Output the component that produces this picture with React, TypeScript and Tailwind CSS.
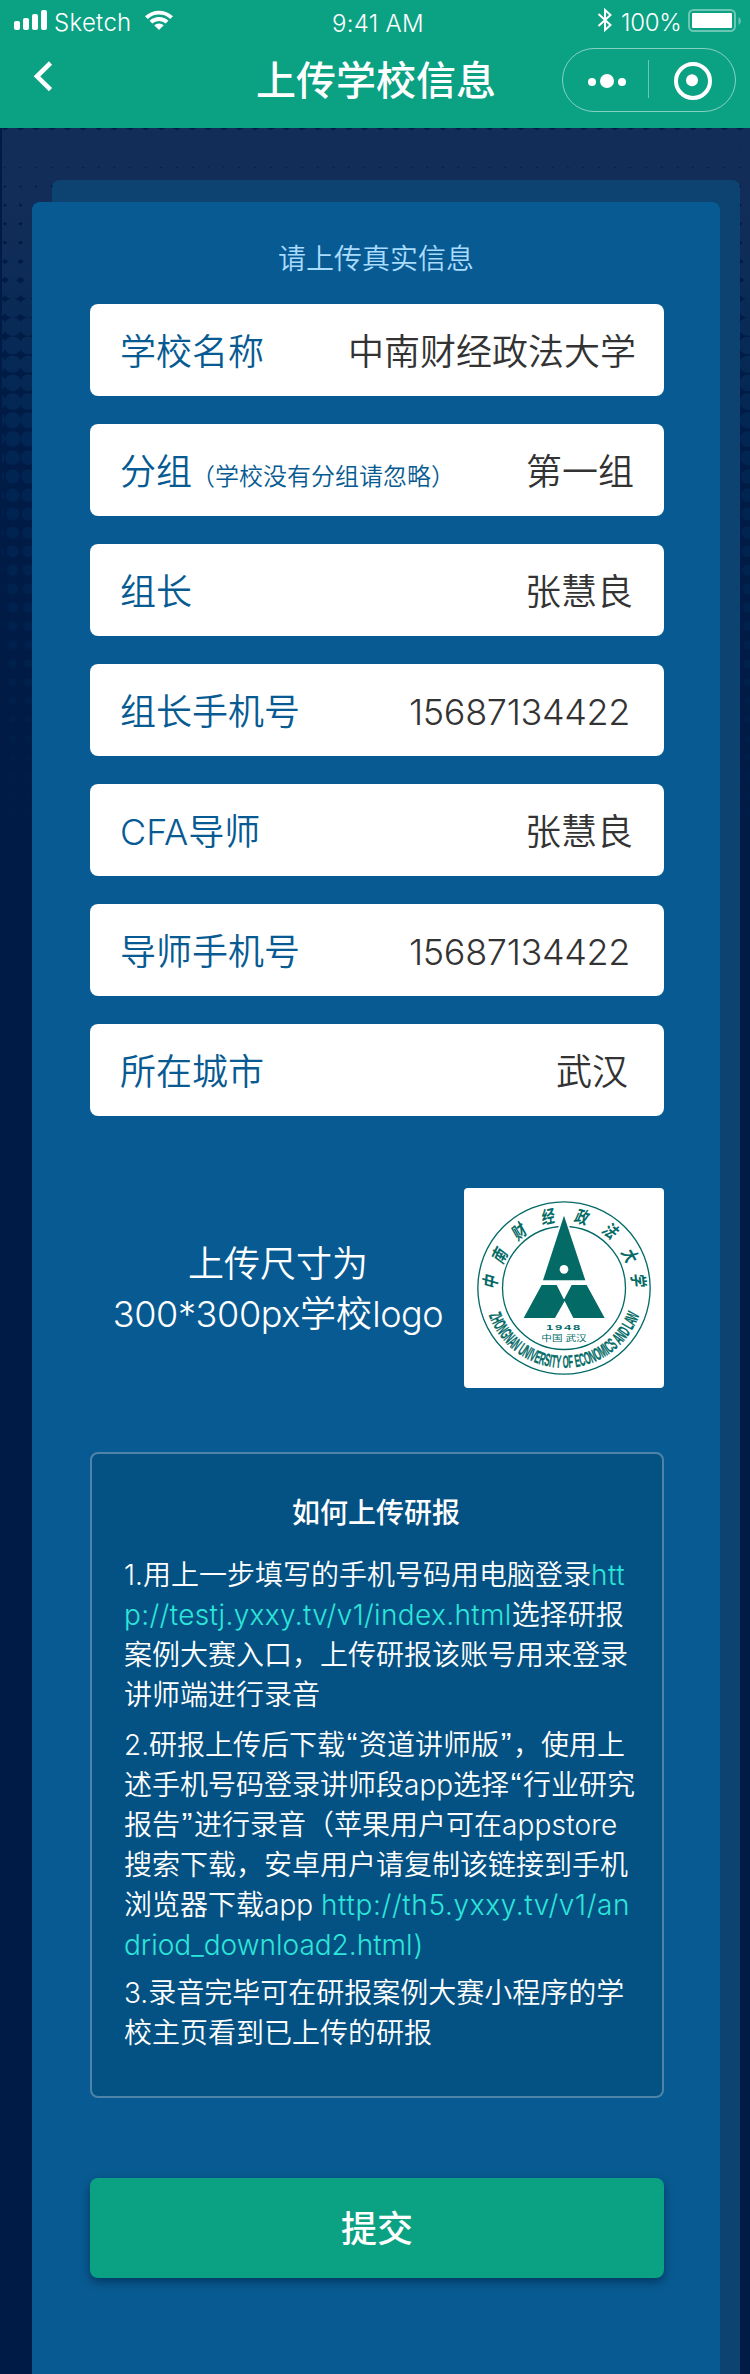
import React from "react";

const DOT_X = 15.64;
const DOT_Y = 18.72;

function buildDots() {
  let d = "";
  for (let row = 0; row < 38; row++) {
    const y = 139.5 + row * DOT_Y;
    const r = 12 - (y - 139.5) * 0.0149;
    if (r <= 0.5) break;
    for (let col = -1; col < 49; col++) {
      const x = 12.7 + col * DOT_X;
      d += `M${(x - r).toFixed(1)} ${y.toFixed(1)}a${r.toFixed(2)} ${r.toFixed(2)} 0 1 0 ${(2 * r).toFixed(2)} 0a${r.toFixed(2)} ${r.toFixed(2)} 0 1 0 ${(-2 * r).toFixed(2)} 0z`;
    }
  }
  return d;
}

const dots = buildDots();

function Backdrop() {
  return (
    <svg className="absolute inset-0" width="750" height="2374" viewBox="0 0 750 2374" aria-hidden="true">
      <defs>
        <linearGradient id="dots" gradientUnits="userSpaceOnUse" x1="0" y1="128" x2="0" y2="830">
          <stop offset="0" stopColor="#132d59" />
          <stop offset="0.15" stopColor="#102d58" />
          <stop offset="0.32" stopColor="#062955" />
          <stop offset="0.5" stopColor="#002553" />
          <stop offset="1" stopColor="#001c48" />
        </linearGradient>
        <clipPath id="inner">
          <rect x="2" y="128" width="748" height="2246" />
        </clipPath>
      </defs>
      <rect width="750" height="2374" fill="#001c46" />
      <path d={dots} fill="url(#dots)" clipPath="url(#inner)" />
    </svg>
  );
}

function StatusBar() {
  return (
    <div className="flex h-[40px] items-start justify-between pl-[14px] pr-[8px]">
      <div className="flex w-[240px] items-start">
        <svg className="mt-[10px]" width="33" height="20" fill="#fff" aria-hidden="true">
          <rect x="0" y="11" width="6" height="9" rx="2" />
          <rect x="9" y="8" width="6" height="12" rx="2" />
          <rect x="18" y="4" width="6" height="16" rx="2" />
          <rect x="27" y="0" width="6" height="20" rx="2" />
        </svg>
        <span className="ml-[7px] mt-[8px] w-[90px] text-[24px] leading-[30px] tracking-[0.3px]">Sketch</span>
        <svg className="mt-[10px]" width="30" height="21" viewBox="144 10 30 21" fill="#fff" aria-hidden="true">
          <path d="M145 16.3 A20.5 20.5 0 0 1 173 16.3 L170.2 19 A16.4 16.4 0 0 0 147.8 19 Z" />
          <path d="M149.6 20.8 A13.8 13.8 0 0 1 168.4 20.8 L165.7 23.5 A10 10 0 0 0 152.3 23.5 Z" />
          <path d="M154.2 25.3 A7.4 7.4 0 0 1 163.8 25.3 L159 30 Z" />
        </svg>
      </div>
      <span className="mt-[8px] text-[24px] leading-[31px] tracking-[0.3px]">9:41 AM</span>
      <div className="flex w-[240px] items-start justify-end">
        <svg className="mt-[8px]" width="16" height="24" fill="none" stroke="#fff" strokeWidth="2" aria-hidden="true">
          <path d="M1.5 6 L13.5 17 L8 22 V2 L13.5 7 L1.5 18" />
        </svg>
        <span className="ml-[8px] mt-[8px] w-[67px] whitespace-nowrap text-[24px] leading-[30px] tracking-[-0.3px]">100%</span>
        <svg className="mt-[9px]" width="54" height="24" aria-hidden="true">
          <rect x="1" y="1" width="46" height="21" rx="4.5" fill="none" stroke="#fff" strokeOpacity="0.4" strokeWidth="2" />
          <rect x="4" y="4" width="40" height="15" rx="1" fill="#fff" />
          <path d="M50.5 8 a4.5 4.5 0 0 1 0 8z" fill="#fff" fillOpacity="0.4" />
        </svg>
      </div>
    </div>
  );
}

function Header() {
  return (
    <header className="relative h-[128px] bg-[#0ba183] text-white">
      <StatusBar />
      <div className="flex h-[80px] items-center justify-between pl-[33px] pr-[13px]">
        <svg className="mb-[9px] w-[175px]" width="175" height="32" viewBox="33 59 175 32" fill="none" stroke="#fff" strokeWidth="4.6" aria-hidden="true">
          <path d="M50.5 62 L37 75.3 L50.5 88.6" />
        </svg>
        <h1 className="pr-[18px] pt-px text-[40px] font-medium leading-[56px]">上传学校信息</h1>
        <svg width="175" height="66" viewBox="562 47 175 66" fill="none" aria-hidden="true">
          <rect x="562.5" y="48.5" width="173" height="63" rx="31.5" stroke="#fff" strokeOpacity="0.5" />
          <path d="M648.5 60V98" stroke="#fff" strokeOpacity="0.4" />
          <g fill="#fff">
            <circle cx="592" cy="82" r="4" />
            <circle cx="607" cy="81" r="7" />
            <circle cx="622" cy="82" r="4" />
            <circle cx="692" cy="80.2" r="6" />
          </g>
          <circle cx="693" cy="81" r="17" stroke="#fff" strokeWidth="4" />
        </svg>
      </div>
    </header>
  );
}

type Field = { label: string; hint?: string; value: string; pad: string };

const fields: Field[] = [
  { label: "学校名称", value: "中南财经政法大学", pad: "pr-[28px]" },
  { label: "分组", hint: "（学校没有分组请忽略）", value: "第一组", pad: "pr-[30px]" },
  { label: "组长", value: "张慧良", pad: "pr-[31px]" },
  { label: "组长手机号", value: "15687134422", pad: "pr-[34px] tracking-[-0.35px]" },
  { label: "CFA导师", value: "张慧良", pad: "pr-[31px]" },
  { label: "导师手机号", value: "15687134422", pad: "pr-[34px] tracking-[-0.35px]" },
  { label: "所在城市", value: "武汉", pad: "pr-[36px]" },
];

function FieldRow({ label, hint, value, pad }: Field) {
  return (
    <div className={`flex h-[92px] items-center justify-between rounded-[8px] bg-white pl-[30px] pt-[3px] ${pad}`}>
      <div className="flex items-baseline whitespace-nowrap text-[36px] leading-[50px] tracking-normal text-[#075b92]">
        {label}
        {hint && <span className="-ml-px text-[24px] leading-[24px]">{hint}</span>}
      </div>
      <div className="whitespace-nowrap text-[36px] leading-[50px] text-[#333333]">{value}</div>
    </div>
  );
}

const ringChars: [string, number, number, number][] = [
  ["中", 122, 333, -84],
  ["南", 150, 256, -63],
  ["财", 208, 184, -40],
  ["经", 295, 140, -12],
  ["政", 396, 142, 14],
  ["法", 482, 184, 38],
  ["大", 540, 258, 62],
  ["学", 565, 332, 84],
];

function SchoolLogo() {
  return (
    <svg className="rounded-[4px] bg-white" width="200" height="200" viewBox="42 54 600 600" fill="#036a66" role="img">
      <circle cx="342" cy="354" r="258.5" fill="none" stroke="#036a66" strokeWidth="4" />
      <circle cx="342" cy="354" r="184.5" fill="none" stroke="#036a66" strokeWidth="4" />
      <path d="M342 120 L412 331 H272z" fill="#fff" />
      <path d="M342 137 L406 331 H279z" />
      <circle cx="342" cy="298" r="13" fill="#fff" />
      <path d="M275 345 H320 L341 387 L343 387 L365 345 H410 L464 444 H370 L344 393 L315 444 H221z" />
      <g fontSize="50" fontWeight="700" textAnchor="middle">
        {ringChars.map(([c, x, y, a]) => (
          <text key={c} transform={`translate(${x} ${y}) rotate(${a}) skewX(-10) scale(0.8 1.05)`} y="18">
            {c}
          </text>
        ))}
      </g>
      <text x="288" y="481" fontSize="21" fontWeight="700" letterSpacing="3" textLength="108" lengthAdjust="spacingAndGlyphs" className="font-['Liberation_Sans',sans-serif]">
        1948
      </text>
      <text x="274" y="513" fontSize="24" fontWeight="400" textLength="136" lengthAdjust="spacingAndGlyphs">
        中国 武汉
      </text>
      <path id="arc" d="M115.500 433.300 A240 240 0 0 0 568.500 433.300" fill="none" />
      <text fontSize="53" fontWeight="700" stroke="#036a66" strokeWidth="1" textLength="588" lengthAdjust="spacingAndGlyphs" className="font-['Liberation_Sans_Narrow','Liberation_Sans',sans-serif]">
        <textPath href="#arc" startOffset="3" textLength="588" lengthAdjust="spacingAndGlyphs">
          ZHONGNAN UNIVERSITY OF ECONOMICS AND LAW
        </textPath>
      </text>
    </svg>
  );
}

function Quote({ children }: { children: React.ReactNode }) {
  return <span className="inline-block w-[14px] text-center font-['Liberation_Sans',sans-serif] text-[32px] leading-none">{children}</span>;
}

function Instructions() {
  return (
    <section className="mt-[64px] h-[646px] whitespace-nowrap rounded-[8px] border-2 border-[#4f84a9] bg-[#045283] pl-[32px] text-[28px] leading-[40px] text-white">
      <h2 className="mt-[39px] pr-[34px] text-center font-medium">如何上传研报</h2>
      <p className="mt-[22px]">
        1.用上一步填写的手机号码用电脑登录<span className="tracking-[0.5px] text-[#2ce6db]">htt</span>
        <br />
        <span className="tracking-[0.35px] text-[#2ce6db]">p://testj.yxxy.tv/v1/index.html</span>选择研报
        <br />
        案例大赛入口，上传研报该账号用来登录
        <br />
        讲师端进行录音
      </p>
      <p className="mt-[10px]">
        2.研报上传后下载<Quote>“</Quote>资道讲师版<Quote>”</Quote>，使用上
        <br />
        述手机号码登录讲师段app选择<Quote>“</Quote>行业研究
        <br />
        报告<Quote>”</Quote>进行录音（苹果用户可在<span className="tracking-[0.15px]">appstore</span>
        <br />
        搜索下载，安卓用户请复制该链接到手机
        <br />
        浏览器下载app <span className="tracking-[0.64px] text-[#2ce6db]">http://th5.yxxy.tv/v1/an</span>
        <br />
        <span className="text-[#2ce6db]">driod_download2.html<span className="ml-px">)</span></span>
      </p>
      <p className="mt-[8px]">
        3.录音完毕可在研报案例大赛小程序的学
        <br />
        校主页看到已上传的研报
      </p>
    </section>
  );
}

export default function App() {
  return (
    <div className="relative h-[2374px] w-[750px] overflow-hidden font-['Inter','Noto_Sans_CJK_SC',sans-serif] font-[350]">
      <Backdrop />
      <Header />
      <div className="relative pl-[32px] pt-[74px]">
        <div className="absolute left-[52px] top-[52px] h-[2194px] w-[688px] rounded-t-[8px] bg-[#0c4371]" />
        <main className="relative h-[2172px] w-[688px] rounded-t-[8px] bg-[#085b92] pl-[58px] pr-[56px] pt-[37px]">
          <p className="pr-[2px] text-center text-[28px] leading-[40px] text-[#a9dcff]">请上传真实信息</p>
          <div className="mt-[25px] flex flex-col gap-[28px]">
            {fields.map((f) => (
              <FieldRow key={f.label} {...f} />
            ))}
          </div>
          <div className="mt-[72px] flex items-center justify-between">
            <p className="ml-[22px] w-[332px] whitespace-nowrap pt-[2px] text-center text-[36px] leading-[50px] text-white">
              上传尺寸为
              <br />
              <span className="tracking-[-0.35px]">300*300px</span>学校<span className="tracking-[-0.4px]">logo</span>
            </p>
            <SchoolLogo />
          </div>
          <Instructions />
          <button className="mt-[80px] block h-[100px] w-full rounded-[8px] bg-[#0ba183] pt-[2px] text-[36px] font-medium text-white shadow-[0_4px_10px_rgba(0,20,50,0.5)]">
            提交
          </button>
        </main>
      </div>
    </div>
  );
}
